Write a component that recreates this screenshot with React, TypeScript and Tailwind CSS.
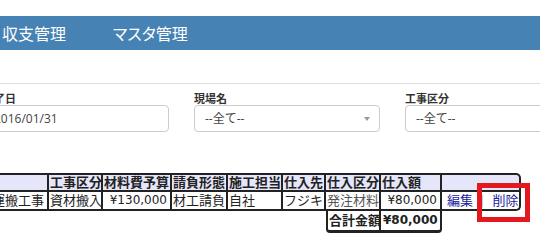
const cols = "grid-cols-[58px_54px_69px_56px_55px_43px_55px_61px_79px]";

const headers = ["", "工事区分", "材料費予算", "請負形態", "施工担当", "仕入先", "仕入区分", "仕入額", ""];

const FilterField = ({ label, value, select }: { label: string; value: string; select?: boolean }) => (
  <div className="flex flex-col">
    <label className="h-[14px] text-[11px] leading-[14px] font-bold text-[#333] font-['Noto_Sans_CJK_JP',sans-serif]">
      {label}
    </label>
    <div className="h-[27px] flex items-center justify-between px-[10px] border border-[#ccc] rounded-[4px] bg-white text-[12px] text-[#444] font-['Open_Sans','Noto_Sans_CJK_JP',sans-serif]">
      <span>{value}</span>
      {select && (
        <span className="mr-[-1px] w-0 h-0 border-l-[3px] border-r-[3px] border-t-[4px] border-l-transparent border-r-transparent border-t-[#999]" />
      )}
    </div>
  </div>
);

const App = () => {
  return (
    <div className="h-[244px] w-[540px] overflow-hidden bg-white">
      <div className="h-4" />
      <nav className="h-[34px] bg-[#4682b4] flex items-center text-white text-[16px] font-['Noto_Sans_CJK_JP',sans-serif]">
        <span className="ml-[2px]">収支管理</span>
        <span className="ml-[47px] [font-feature-settings:'palt']">マスタ管理</span>
      </nav>

      <div className="mt-[33px] border-t border-[#ddd] pt-[7px]">
        <div className="ml-[-17px] grid grid-cols-[186px_186px_186px] gap-x-[25px]">
          <FilterField label="完了日" value="2016/01/31" />
          <FilterField label="現場名" value="--全て--" select />
          <FilterField label="工事区分" value="--全て--" />
        </div>
      </div>

      <div className="mt-[41px] ml-[-9px] text-[13px] text-[#222] font-['DejaVu_Sans','Noto_Sans_CJK_JP',sans-serif]">
        <div className={`grid ${cols}`}>
          {headers.map((h, i) => (
            <div
              key={i}
              className={`h-[19px] leading-[15px] pl-[1px] border-t-2 border-b-2 border-r-2 border-[#222] bg-[#e6e6fa] font-bold text-[#222] whitespace-nowrap ${i === 8 ? "rounded-tr-[5px]" : ""}`}
            >
              {h}
            </div>
          ))}

          <div className="h-[19px] leading-[17px] pl-[1px] border-b-2 border-r-2 border-[#222] whitespace-nowrap">運搬工事</div>
          <div className="h-[19px] leading-[17px] pl-[1px] border-b-2 border-r-2 border-[#222] whitespace-nowrap">資材搬入</div>
          <div className="h-[19px] leading-[17px] pr-[3px] text-right text-[12px] border-b-2 border-r-2 border-[#222]">¥130,000</div>
          <div className="h-[19px] leading-[17px] pl-[1px] border-b-2 border-r-2 border-[#222] whitespace-nowrap">材工請負</div>
          <div className="h-[19px] leading-[17px] pl-[1px] border-b-2 border-r-2 border-[#222]">自社</div>
          <div className="h-[19px] leading-[17px] pl-[1px] border-b-2 border-r-2 border-[#222]">フジキ</div>
          <div className="h-[19px] leading-[17px] pl-[1px] border-b-2 border-r-2 border-[#222] text-[#555] whitespace-nowrap">発注材料</div>
          <div className="h-[19px] leading-[17px] pr-[3px] text-right text-[12px] border-b-2 border-r-2 border-[#222]">¥80,000</div>
          <div className="relative h-[19px] leading-[17px] pl-[5px] border-b-2 border-r-2 border-[#222] rounded-br-[5px] flex whitespace-nowrap">
            <a className="text-[#22229a]">編集</a>
            <span className="ml-[7px] text-[#bbb]">|</span>
            <a className="ml-[8px] text-[#22229a]">削除</a>
            <div className="absolute left-[35px] top-[-9px] w-[53px] h-[39px] border-[5px] border-[#e3191f]" />
          </div>

          <div className="col-start-7 h-[22px] leading-[19px] pl-[1px] border-l-2 border-r-2 border-b-[3px] border-[#222] rounded-bl-[4px] font-bold whitespace-nowrap">
            合計金額
          </div>
          <div className="h-[22px] leading-[19px] pl-[2px] border-r-2 border-b-[3px] border-[#222] rounded-br-[4px] font-bold text-[12px]">
            ¥80,000
          </div>
        </div>
      </div>
    </div>
  );
};

export default App;
